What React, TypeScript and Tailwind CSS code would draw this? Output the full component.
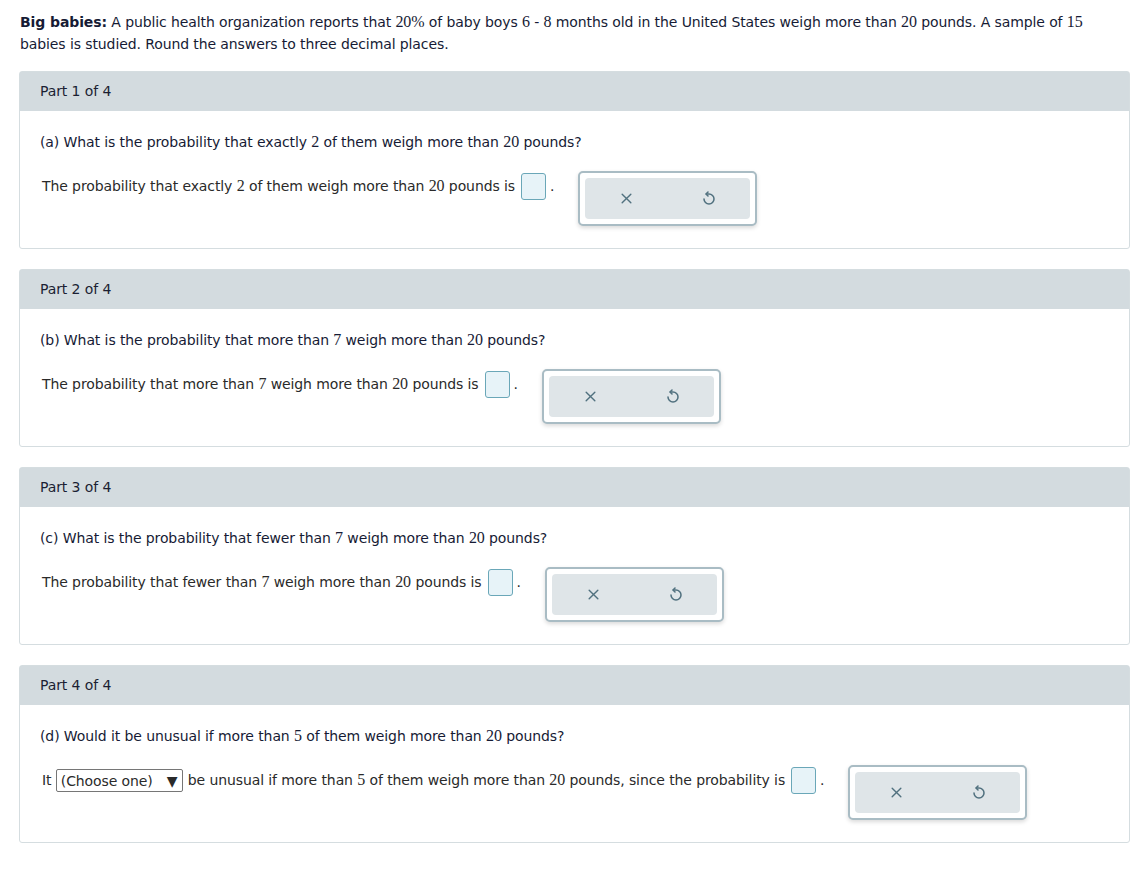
const sans = { fontFamily: '"DejaVu Sans", sans-serif' };

function N({ children }: { children: React.ReactNode }) {
  return (
    <span className="font-['Liberation_Serif',serif] text-[16px] leading-none">{children}</span>
  );
}

function AnswerBox() {
  return (
    <span className="inline-block w-[25px] h-[27px] align-middle ml-[6px] mr-[4px] rounded-[3px] border border-[#6aa7b8] bg-[#e7f3f8]" />
  );
}

function UndoIcon() {
  return (
    <svg width="16" height="16" viewBox="0 0 24 24" fill="none" stroke="#51717f" strokeWidth="2.3" strokeLinecap="round" strokeLinejoin="round">
      <path d="M8 4.5h4a7.5 7.5 0 1 1 -7.5 7.5" />
      <path d="M10.5 1.5 L7.5 4.5 L10.5 7.5" />
    </svg>
  );
}

function CloseIcon() {
  return (
    <svg width="13" height="13" viewBox="0 0 24 24" fill="none" stroke="#51717f" strokeWidth="2.6" strokeLinecap="round">
      <path d="M4 4 L20 20 M20 4 L4 20" />
    </svg>
  );
}

function Tools() {
  return (
    <div className="w-[179px] h-[55px] p-[5px] rounded-[5px] border-2 border-[#a9bcc4] bg-white shadow-[0_2px_4px_rgba(0,0,0,0.15)]">
      <div className="h-full rounded-[4px] bg-[#dfe5e8] flex items-center">
        <div className="flex-1 flex justify-center">
          <CloseIcon />
        </div>
        <div className="flex-1 flex justify-center">
          <UndoIcon />
        </div>
      </div>
    </div>
  );
}

function Part({
  n,
  question,
  answer,
}: {
  n: number;
  question: React.ReactNode;
  answer: React.ReactNode;
}) {
  return (
    <div className="w-[1111px] mb-[20px] border border-[#d5dde0] rounded-[3px] bg-white">
      <div className="h-[39px] px-5 flex items-center bg-[#d3dbdf] text-[#1b1f33]">Part {n} of 4</div>
      <div className="px-5 pt-5 pb-[22px]">
        <p className="leading-[22px] text-[#161b35]">{question}</p>
        <div className="mt-[18px] flex items-start gap-[24px]">
          <div className="mt-[2px] pl-[2px] leading-[24px] whitespace-nowrap text-[#2a2a2a]">{answer}</div>
          <Tools />
        </div>
      </div>
    </div>
  );
}

export default function App() {
  return (
    <div style={sans} className="min-h-screen bg-white text-[14px] tracking-[-0.1px] text-[#1f1f1f] pl-[19px] pt-[11px]">
      <p className="leading-[22px] pl-px pr-10 mb-[16px] text-[#161b35]">
        <b>Big babies:</b> A public health organization reports that <N>20%</N> of baby boys{" "}
        <N>6</N> - <N>8</N> months old in the United States weigh more than <N>20</N> pounds. A
        sample of <N>15</N> babies is studied. Round the answers to three decimal places.
      </p>

      <Part
        n={1}
        question={
          <>
            (a) What is the probability that exactly <N>2</N> of them weigh more than <N>20</N> pounds?
          </>
        }
        answer={
          <>
            The probability that exactly <N>2</N> of them weigh more than <N>20</N> pounds is
            <AnswerBox />.
          </>
        }
      />
      <Part
        n={2}
        question={
          <>
            (b) What is the probability that more than <N>7</N> weigh more than <N>20</N> pounds?
          </>
        }
        answer={
          <>
            The probability that more than <N>7</N> weigh more than <N>20</N> pounds is
            <AnswerBox />.
          </>
        }
      />
      <Part
        n={3}
        question={
          <>
            (c) What is the probability that fewer than <N>7</N> weigh more than <N>20</N> pounds?
          </>
        }
        answer={
          <>
            The probability that fewer than <N>7</N> weigh more than <N>20</N> pounds is
            <AnswerBox />.
          </>
        }
      />
      <Part
        n={4}
        question={
          <>
            (d) Would it be unusual if more than <N>5</N> of them weigh more than <N>20</N> pounds?
          </>
        }
        answer={
          <>
            It{" "}
            <span className="inline-flex items-center h-[23px] pl-[4px] pr-[5px] align-middle border border-[#767676] rounded-[2px] bg-white">
              (Choose one)<span className="ml-[14px] text-[14px]">▼</span>
            </span>{" "}
            be unusual if more than <N>5</N> of them weigh more than <N>20</N> pounds, since the
            probability is
            <AnswerBox />.
          </>
        }
      />
    </div>
  );
}
